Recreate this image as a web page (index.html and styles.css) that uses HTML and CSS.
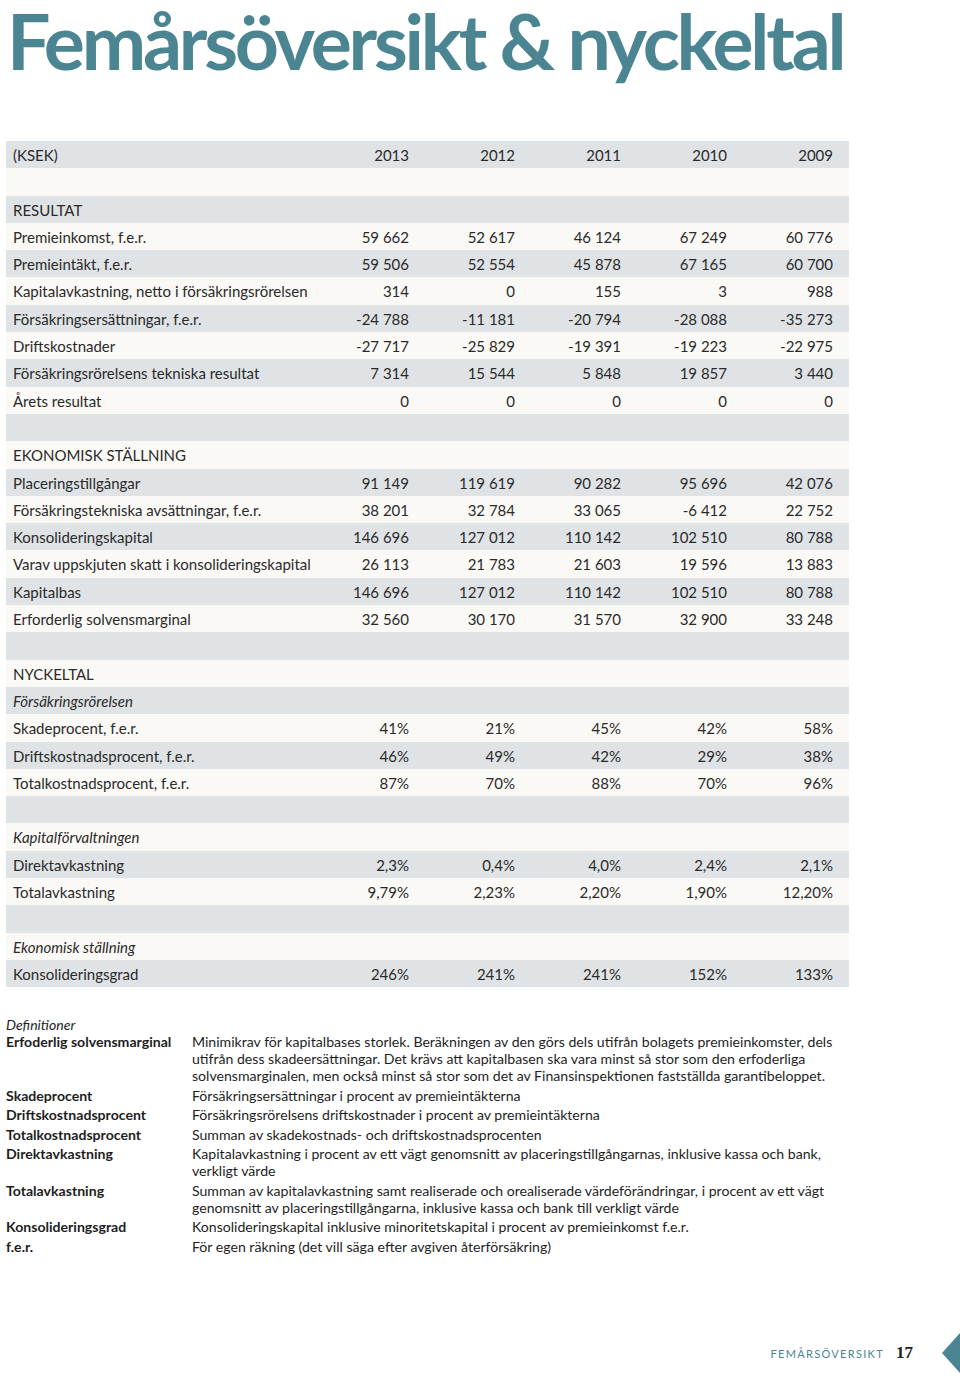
FILE: index.html
```html
<!DOCTYPE html>
<html lang="sv">
<head>
<meta charset="utf-8">
<title>Femårsöversikt &amp; nyckeltal</title>
<link rel="stylesheet" href="styles.css">
</head>
<body>
<div class="page">
  <h1 class="title">Femårsöversikt &amp; nyckeltal</h1>

  <table class="kt">
    <colgroup><col class="c-label"><col class="c-num"><col class="c-num"><col class="c-num"><col class="c-num"><col class="c-num"></colgroup>
    <tr><td>(KSEK)</td><td>2013</td><td>2012</td><td>2011</td><td>2010</td><td>2009</td></tr>
    <tr><td></td><td></td><td></td><td></td><td></td><td></td></tr>
    <tr><td>RESULTAT</td><td></td><td></td><td></td><td></td><td></td></tr>
    <tr><td>Premieinkomst, f.e.r.</td><td>59 662</td><td>52 617</td><td>46 124</td><td>67 249</td><td>60 776</td></tr>
    <tr><td>Premieintäkt, f.e.r.</td><td>59 506</td><td>52 554</td><td>45 878</td><td>67 165</td><td>60 700</td></tr>
    <tr><td>Kapitalavkastning, netto i försäkringsrörelsen</td><td>314</td><td>0</td><td>155</td><td>3</td><td>988</td></tr>
    <tr><td>Försäkringsersättningar, f.e.r.</td><td>-24 788</td><td>-11 181</td><td>-20 794</td><td>-28 088</td><td>-35 273</td></tr>
    <tr><td>Driftskostnader</td><td>-27 717</td><td>-25 829</td><td>-19 391</td><td>-19 223</td><td>-22 975</td></tr>
    <tr><td>Försäkringsrörelsens tekniska resultat</td><td>7 314</td><td>15 544</td><td>5 848</td><td>19 857</td><td>3 440</td></tr>
    <tr><td>Årets resultat</td><td>0</td><td>0</td><td>0</td><td>0</td><td>0</td></tr>
    <tr><td></td><td></td><td></td><td></td><td></td><td></td></tr>
    <tr><td>EKONOMISK STÄLLNING</td><td></td><td></td><td></td><td></td><td></td></tr>
    <tr><td>Placeringstillgångar</td><td>91 149</td><td>119 619</td><td>90 282</td><td>95 696</td><td>42 076</td></tr>
    <tr><td>Försäkringstekniska avsättningar, f.e.r.</td><td>38 201</td><td>32 784</td><td>33 065</td><td>-6 412</td><td>22 752</td></tr>
    <tr><td>Konsolideringskapital</td><td>146 696</td><td>127 012</td><td>110 142</td><td>102 510</td><td>80 788</td></tr>
    <tr><td>Varav uppskjuten skatt i konsolideringskapital</td><td>26 113</td><td>21 783</td><td>21 603</td><td>19 596</td><td>13 883</td></tr>
    <tr><td>Kapitalbas</td><td>146 696</td><td>127 012</td><td>110 142</td><td>102 510</td><td>80 788</td></tr>
    <tr><td>Erforderlig solvensmarginal</td><td>32 560</td><td>30 170</td><td>31 570</td><td>32 900</td><td>33 248</td></tr>
    <tr><td></td><td></td><td></td><td></td><td></td><td></td></tr>
    <tr><td>NYCKELTAL</td><td></td><td></td><td></td><td></td><td></td></tr>
    <tr><td class="it">Försäkringsrörelsen</td><td></td><td></td><td></td><td></td><td></td></tr>
    <tr><td>Skadeprocent, f.e.r.</td><td>41%</td><td>21%</td><td>45%</td><td>42%</td><td>58%</td></tr>
    <tr><td>Driftskostnadsprocent, f.e.r.</td><td>46%</td><td>49%</td><td>42%</td><td>29%</td><td>38%</td></tr>
    <tr><td>Totalkostnadsprocent, f.e.r.</td><td>87%</td><td>70%</td><td>88%</td><td>70%</td><td>96%</td></tr>
    <tr><td></td><td></td><td></td><td></td><td></td><td></td></tr>
    <tr><td class="it">Kapitalförvaltningen</td><td></td><td></td><td></td><td></td><td></td></tr>
    <tr><td>Direktavkastning</td><td>2,3%</td><td>0,4%</td><td>4,0%</td><td>2,4%</td><td>2,1%</td></tr>
    <tr><td>Totalavkastning</td><td>9,79%</td><td>2,23%</td><td>2,20%</td><td>1,90%</td><td>12,20%</td></tr>
    <tr><td></td><td></td><td></td><td></td><td></td><td></td></tr>
    <tr><td class="it">Ekonomisk ställning</td><td></td><td></td><td></td><td></td><td></td></tr>
    <tr><td>Konsolideringsgrad</td><td>246%</td><td>241%</td><td>241%</td><td>152%</td><td>133%</td></tr>
  </table>

  <section class="defs">
    <div class="defs-head">Definitioner</div>
    <dl class="deflist">
      <div class="def"><dt>Erfoderlig solvensmarginal</dt><dd>Minimikrav för kapitalbases storlek. Beräkningen av den görs dels utifrån bolagets premieinkomster, dels utifrån dess skadeersättningar. Det krävs att kapitalbasen ska vara minst så stor som den erfoderliga solvensmarginalen, men också minst så stor som det av Finansinspektionen fastställda garantibeloppet.</dd></div>
      <div class="def"><dt>Skadeprocent</dt><dd>Försäkringsersättningar i procent av premieintäkterna</dd></div>
      <div class="def"><dt>Driftskostnadsprocent</dt><dd>Försäkringsrörelsens driftskostnader i procent av premieintäkterna</dd></div>
      <div class="def"><dt>Totalkostnadsprocent</dt><dd>Summan av skadekostnads- och driftskostnadsprocenten</dd></div>
      <div class="def"><dt>Direktavkastning</dt><dd>Kapitalavkastning i procent av ett vägt genomsnitt av placeringstillgångarnas, inklusive kassa och bank, verkligt värde</dd></div>
      <div class="def"><dt>Totalavkastning</dt><dd>Summan av kapitalavkastning samt realiserade och orealiserade värdeförändringar, i procent av ett vägt genomsnitt av placeringstillgångarna, inklusive kassa och bank till verkligt värde</dd></div>
      <div class="def"><dt>Konsolideringsgrad</dt><dd>Konsolideringskapital inklusive minoritetskapital i procent av premieinkomst f.e.r.</dd></div>
      <div class="def"><dt>f.e.r.</dt><dd>För egen räkning (det vill säga efter avgiven återförsäkring)</dd></div>
    </dl>
  </section>

  <footer class="foot">
    <span class="foot-label">FEMÅRSÖVERSIKT</span>
    <span class="foot-num">17</span>
    <svg class="foot-tab" width="18" height="40" viewBox="0 0 18 40" aria-hidden="true"><polygon points="18,0 0,20 18,40" fill="#4b8592"/></svg>
  </footer>
</div>
</body>
</html>
```

FILE: styles.css
```css
html, body {
  margin: 0;
  padding: 0;
  background: #ffffff;
}

.page {
  width: 960px;
  height: 1379px;
  display: flex;
  flex-direction: column;
  font-family: Lato, "Open Sans", sans-serif;
  color: #2a2a2a;
  box-sizing: border-box;
}

.title {
  margin: 0;
  padding: 0 0 0 7px;
  height: 141px;
  font-family: Lato, sans-serif;
  font-weight: 700;
  font-size: 77px;
  line-height: 80px;
  letter-spacing: -3.25px;
  color: #4b8592;
  white-space: nowrap;
}

.kt {
  border-collapse: collapse;
  width: 843px;
  margin-left: 6px;
  font-size: 15px;
  table-layout: fixed;
}

.c-label { width: 313px; }
.c-num { width: 106px; }

.kt tr { height: 27.3px; }
.kt tr:nth-child(odd) { background: #dfe3e6; }
.kt tr:nth-child(even) { background: #fbf9f6; }

.kt td {
  padding: 1px 16px 0 0;
  text-align: right;
  white-space: nowrap;
  line-height: 26.3px;
}

.kt td:first-child {
  padding: 1px 0 0 7px;
  text-align: left;
}

.kt td.it { font-style: italic; }

.defs {
  margin-top: 29px;
  padding-left: 6px;
  font-size: 14.1px;
  line-height: 17px;
  color: #1e1e1e;
}

.defs-head {
  font-style: italic;
}

.deflist {
  margin: 0;
  display: flex;
  flex-direction: column;
  gap: 2.5px;
}

.def {
  display: flex;
}

.def dt {
  width: 186px;
  flex: none;
  font-weight: 700;
}

.def dd {
  margin: 0;
  width: 652px;
}

.foot {
  margin-top: auto;
  height: 44px;
  display: flex;
  align-items: center;
  justify-content: flex-end;
  padding-bottom: 4px;
}

.foot-label {
  font-size: 11px;
  letter-spacing: 1.3px;
  color: #4b8592;
}

.foot-num {
  margin-left: 12px;
  font-family: "Liberation Serif", serif;
  font-size: 17px;
  font-weight: 700;
  color: #1e1e1e;
}

.foot-tab {
  margin-left: 29px;
  display: block;
}
```
